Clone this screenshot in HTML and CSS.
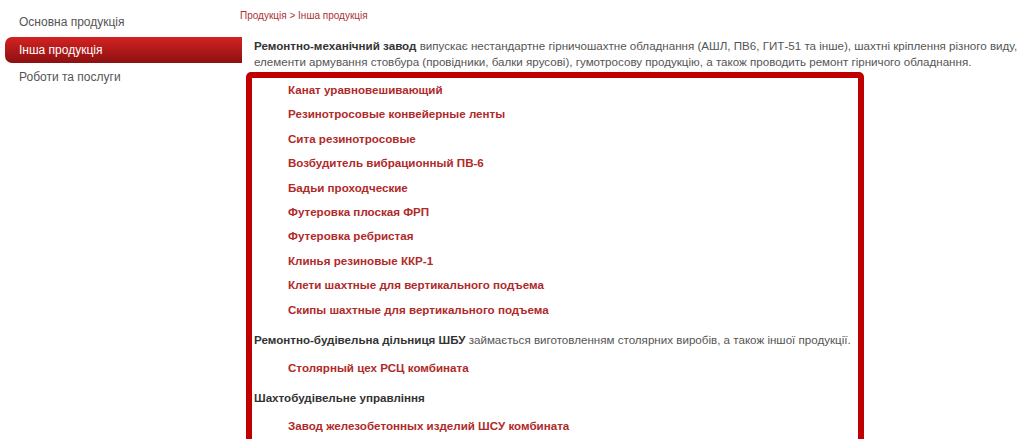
FILE: index.html
```html
<!DOCTYPE html>
<html lang="uk">
<head>
<meta charset="utf-8">
<title>Інша продукція</title>
<link rel="stylesheet" href="styles.css">
</head>
<body>
<div class="page">
  <nav class="sidebar">
    <a class="nav-item" href="#">Основна продукція</a>
    <a class="nav-item active" href="#">Інша продукція</a>
    <a class="nav-item" href="#">Роботи та послуги</a>
  </nav>
  <main class="content">
    <div class="crumbs"><a href="#">Продукція</a> &gt; <a href="#">Інша продукція</a></div>
    <p class="lead"><b>Ремонтно-механічний завод</b> випускає нестандартне гірничошахтне обладнання (АШЛ, ПВ6, ГИТ-51 та інше), шахтні кріплення різного виду, елементи армування стовбура (провідники, балки ярусові), гумотросову продукцію, а також проводить ремонт гірничого обладнання.</p>
    <ul class="links">
      <li><a href="#">Канат уравновешивающий</a></li>
      <li><a href="#">Резинотросовые конвейерные ленты</a></li>
      <li><a href="#">Сита резинотросовые</a></li>
      <li><a href="#">Возбудитель вибрационный ПВ-6</a></li>
      <li><a href="#">Бадьи проходческие</a></li>
      <li><a href="#">Футеровка плоская ФРП</a></li>
      <li><a href="#">Футеровка ребристая</a></li>
      <li><a href="#">Клинья резиновые ККР-1</a></li>
      <li><a href="#">Клети шахтные для вертикального подъема</a></li>
      <li><a href="#">Скипы шахтные для вертикального подъема</a></li>
    </ul>
    <p class="section"><b>Ремонтно-будівельна дільниця ШБУ</b> займається виготовленням столярних виробів, а також іншої продукції.</p>
    <ul class="links">
      <li><a href="#">Столярный цех РСЦ комбината</a></li>
    </ul>
    <p class="section"><b>Шахтобудівельне управління</b></p>
    <ul class="links">
      <li><a href="#">Завод железобетонных изделий ШСУ комбината</a></li>
    </ul>
  </main>
  <div class="highlight"></div>
</div>
</body>
</html>
```

FILE: styles.css
```css
html, body {
  margin: 0;
  background: #fff;
}

body {
  font-family: "Liberation Sans", Arial, sans-serif;
  font-size: 11.6px;
  color: #555;
  overflow: hidden;
}

a {
  text-decoration: none;
}

.page {
  position: relative;
  display: flex;
  align-items: flex-start;
}

.sidebar {
  width: 237px;
  margin-left: 5px;
  padding-top: 9px;
  display: flex;
  flex-direction: column;
  gap: 1px;
  flex-shrink: 0;
}

.nav-item {
  display: block;
  height: 26.5px;
  line-height: 26.5px;
  padding-left: 14px;
  color: #555;
  font-size: 12px;
}

.nav-item.active {
  color: #fff;
  background: linear-gradient(#d42222, #8c1010);
  border-radius: 7px 0 0 7px;
}

.content {
  flex: 1;
  padding-top: 9px;
  margin-left: -2px;
}

.crumbs {
  font-size: 10px;
  color: #a33;
  line-height: 14px;
}

.crumbs a {
  color: #a33;
}

.lead {
  margin: 15px 0 0 14px;
  line-height: 16px;
}

.lead b, .section b {
  color: #333;
}

.links {
  list-style: none;
  margin: 8px 0 0 0;
  padding: 0 0 0 48px;
}

.links li {
  line-height: 24.4px;
}

.links a {
  color: #b02a2a;
  font-weight: bold;
}

.section {
  margin: 10px 0 0 14px;
  line-height: 16px;
}

.highlight {
  position: absolute;
  left: 246px;
  top: 72px;
  width: 606px;
  height: 400px;
  border: 6px solid #c00000;
  border-radius: 5px;
  pointer-events: none;
}
```
